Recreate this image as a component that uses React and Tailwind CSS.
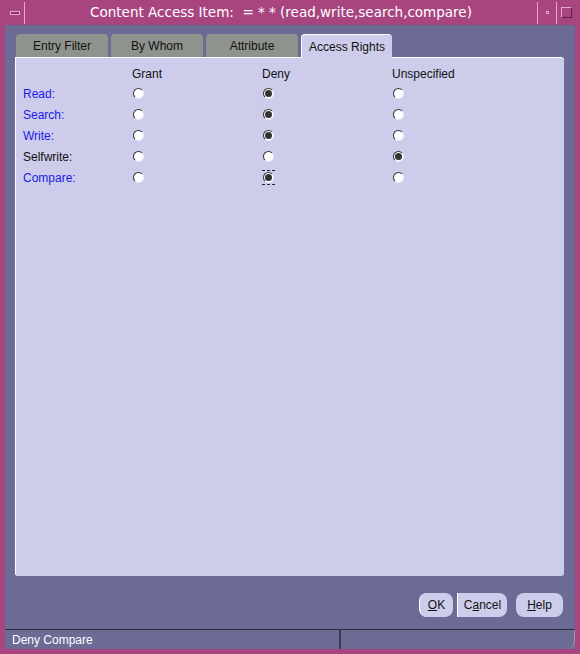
import React from 'react';

const rows = [
  { label: 'Read:', value: 'deny', blue: true },
  { label: 'Search:', value: 'deny', blue: true },
  { label: 'Write:', value: 'deny', blue: true },
  { label: 'Selfwrite:', value: 'unspecified', blue: false },
  { label: 'Compare:', value: 'deny', blue: true, focus: true },
];

const tabs = ['Entry Filter', 'By Whom', 'Attribute'];

function Radio({ checked, focus }) {
  return (
    <span
      className={
        'inline-flex items-center justify-center w-[13px] h-[15px] ' +
        (focus ? 'border-t border-b border-dashed border-[#222]' : 'border-t border-b border-transparent')
      }
    >
      <span className="w-[11px] h-[11px] rounded-full bg-white border border-t-[#333] border-l-[#333] border-b-[#e8e8ff] border-r-[#e8e8ff] flex items-center justify-center">
        {checked && <span className="w-[7px] h-[7px] rounded-full bg-[#333]" />}
      </span>
    </span>
  );
}

export default function App() {
  return (
    <div
      className="w-[580px] h-[654px] bg-[#a8457f] flex flex-col px-[5px] pb-[5px] text-[12px]"
      style={{ fontFamily: '"Liberation Sans", Arial, sans-serif' }}
    >
      {/* title bar */}
      <div className="h-[25px] flex items-center">
        <div className="w-[20px] h-[22px] border-r border-[#e6a9cc] flex items-center justify-center">
          <span className="w-[10px] h-[4px] border border-[#e6a9cc] bg-[#8c3066]" />
        </div>
        <div
          className="flex-1 text-center text-white text-[13.5px]"
          style={{ fontFamily: '"DejaVu Sans", sans-serif' }}
        >
          Content Access Item:&nbsp; = * * (read,write,search,compare)
        </div>
        <div className="w-[19px] h-[22px] border-l border-[#e6a9cc] flex items-center justify-center">
          <span className="w-[3px] h-[3px] border border-[#e6a9cc]" />
        </div>
        <div className="w-[19px] h-[22px] border-l border-[#e6a9cc] flex items-center justify-center">
          <span className="w-[11px] h-[11px] border border-[#e6a9cc] border-r-[#5a1c40] border-b-[#5a1c40]" />
        </div>
      </div>

      {/* body */}
      <div className="flex-1 bg-[#6b6b96] flex flex-col">
        <div className="pt-[8px] pl-[10px] pr-[11px]">
          <div className="flex items-end h-[24px] gap-[3px] pl-[1px]">
            {tabs.map((t) => (
              <div
                key={t}
                className="w-[92px] h-[23px] bg-[#8f938e] rounded-t-[4px] flex items-center justify-center text-[#111]"
              >
                {t}
              </div>
            ))}
            <div className="w-[91px] h-[24px] bg-[#cdcdeb] rounded-t-[4px] border-t border-l border-white flex items-center justify-center text-[#111] relative top-[1px]">
              Access Rights
            </div>
          </div>
          <div className="h-[519px] bg-[#cdcdeb] rounded-tr-[3px] rounded-b-[3px] border-l border-t border-white pt-[7px]">
            <div className="grid grid-cols-[116px_130px_130px_1fr] h-[18px] items-center text-[#111]">
              <span />
              <span>Grant</span>
              <span>Deny</span>
              <span>Unspecified</span>
            </div>
            {rows.map((r) => (
              <div
                key={r.label}
                className="grid grid-cols-[116px_130px_130px_1fr] h-[21px] items-center"
              >
                <span className={'pl-[7px] ' + (r.blue ? 'text-[#1a1ae6]' : 'text-[#111]')}>
                  {r.label}
                </span>
                <span className="flex">
                  <Radio checked={r.value === 'grant'} />
                </span>
                <span className="flex">
                  <Radio checked={r.value === 'deny'} focus={r.focus} />
                </span>
                <span className="flex">
                  <Radio checked={r.value === 'unspecified'} />
                </span>
              </div>
            ))}
          </div>
        </div>

        {/* buttons */}
        <div className="flex justify-end pr-[12px] mt-[17px] gap-[4px] text-[#111]">
          <button className="w-[34px] h-[24px] bg-[#cdcdeb] rounded-[8px] border-l border-white">
            <span className="underline">O</span>K
          </button>
          <button className="w-[50px] h-[24px] bg-[#cdcdeb] rounded-tr-[8px] rounded-br-[8px] border-l border-white mr-[5px]">
            C<span className="underline">a</span>ncel
          </button>
          <button className="w-[47px] h-[24px] bg-[#cdcdeb] rounded-[8px]">
            <span className="underline">H</span>elp
          </button>
        </div>

        {/* status bar */}
        <div className="mt-[12px] h-[20px] flex border-t border-[#2a2a3a]">
          <div className="w-[336px] border-r-2 border-[#3a3a55] rounded-bl-[6px] text-white pl-[7px] flex items-center">
            Deny Compare
          </div>
          <div className="flex-1 rounded-br-[8px] border-r border-[#9a9ab0]" />
        </div>
      </div>
    </div>
  );
}
